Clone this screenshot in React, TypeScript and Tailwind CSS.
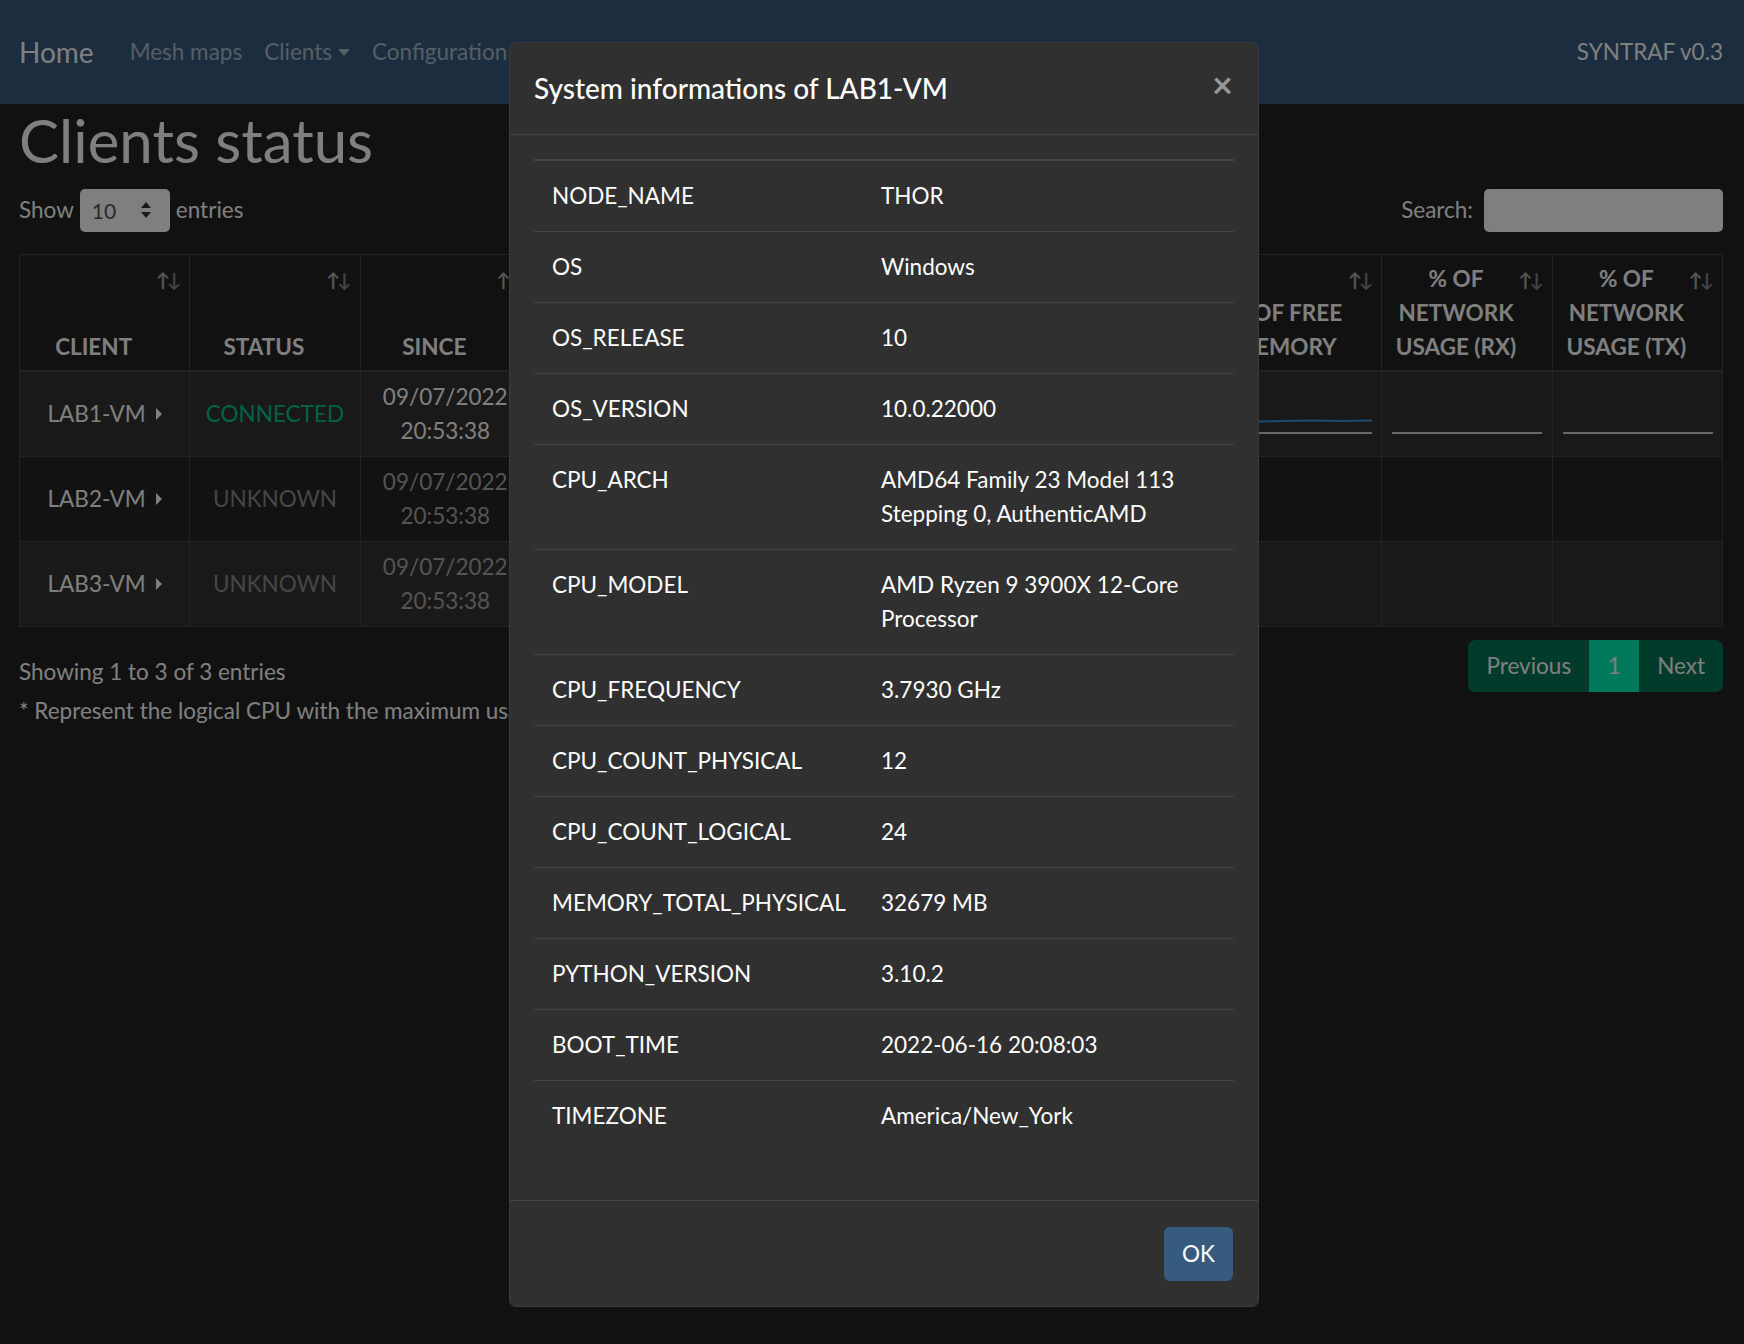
import React from "react";

const columns = [
  "CLIENT",
  "STATUS",
  "SINCE",
  "IP ADDRESS",
  "UPTIME",
  "% OF CPU USAGE",
  "% OF MAX CPU *",
  "% OF FREE MEMORY",
  "% OF NETWORK USAGE (RX)",
  "% OF NETWORK USAGE (TX)",
];

const clients = [
  { name: "LAB1-VM", status: "CONNECTED", connected: true },
  { name: "LAB2-VM", status: "UNKNOWN", connected: false },
  { name: "LAB3-VM", status: "UNKNOWN", connected: false },
];

const sysinfo: [string, string][] = [
  ["NODE_NAME", "THOR"],
  ["OS", "Windows"],
  ["OS_RELEASE", "10"],
  ["OS_VERSION", "10.0.22000"],
  ["CPU_ARCH", "AMD64 Family 23 Model 113 Stepping 0, AuthenticAMD"],
  ["CPU_MODEL", "AMD Ryzen 9 3900X 12-Core Processor"],
  ["CPU_FREQUENCY", "3.7930 GHz"],
  ["CPU_COUNT_PHYSICAL", "12"],
  ["CPU_COUNT_LOGICAL", "24"],
  ["MEMORY_TOTAL_PHYSICAL", "32679 MB"],
  ["PYTHON_VERSION", "3.10.2"],
  ["BOOT_TIME", "2022-06-16 20:08:03"],
  ["TIMEZONE", "America/New_York"],
];

function SortIcon() {
  return (
    <span className="absolute right-[11px] top-[15px] flex text-[19px] leading-none tracking-[-3px]">
      <span className="text-[#aaa]">↑</span>
      <span className="text-[#888]">↓</span>
    </span>
  );
}

function Sparkline({ line }: { line: boolean }) {
  return (
    <svg width="150" height="40" viewBox="0 0 150 40" className="mx-auto block">
      {line && (
        <polyline
          points="0,27 30,27.5 60,27 90,26.5 120,27 150,26.5"
          fill="none"
          stroke="#3a97dd"
          strokeWidth="2"
        />
      )}
      <line x1="0" y1="39" x2="150" y2="39" stroke="#d0d0d0" strokeWidth="2" />
    </svg>
  );
}

export default function App() {
  return (
    <div className="relative min-h-screen bg-[#222] font-['Lato',sans-serif] text-white">
      {/* navbar */}
      <nav className="flex h-[104px] items-center bg-[#375a7f] pl-[19px] pr-[21px]">
        <span className="mr-[36px] text-[28px] leading-none">Home</span>
        <div className="flex items-center gap-[22px] text-[22.5px] text-white/60">
          <span>Mesh maps</span>
          <span className="flex items-center gap-[6px]">
            Clients
            <svg width="12" height="7" viewBox="0 0 12 7">
              <path d="M0 0h12L6 7z" fill="currentColor" />
            </svg>
          </span>
          <span>Configuration</span>
        </div>
        <span className="ml-auto text-[22.5px]">SYNTRAF v0.3</span>
      </nav>

      <main className="pl-[19px] pr-[21px]">
        <h1 className="h-[72px] text-[60px] leading-[72px]">Clients status</h1>

        <div className="mt-[12px] flex h-[44px] items-center text-[22.5px]">
          <span>Show</span>
          <div className="ml-[6px] mr-[6px] flex h-[43px] w-[90px] items-center justify-between rounded-[5px] bg-white pl-[12px] pr-[18px] text-[21px] text-[#555]">
            <span className="mt-[2px]">10</span>
            <svg width="12" height="18" viewBox="0 0 12 18">
              <path d="M6 1l5 6H1zM6 17l5-6H1z" fill="#333" />
            </svg>
          </div>
          <span>entries</span>
          <span className="ml-auto mr-[11px]">Search:</span>
          <div className="h-[43px] w-[239px] rounded-[5px] bg-white" />
        </div>

        <table className="mt-[22px] w-full table-fixed border-collapse border border-[#444] text-[22.5px] leading-[34px]">
          <thead>
            <tr className="h-[116px] border-b-2 border-[#444] bg-[#222]">
              {columns.map((c) => (
                <th
                  key={c}
                  className="relative border-x border-[#444] pb-[6px] pl-[10px] pr-[32px] pt-[6px] text-center align-bottom font-bold"
                >
                  {c}
                  <SortIcon />
                </th>
              ))}
            </tr>
          </thead>
          <tbody>
            {clients.map((cl, i) => (
              <tr
                key={cl.name}
                className={`h-[84px] border-t border-[#444] ${i % 2 === 0 ? "bg-[#333]" : "bg-[#252525]"}`}
              >
                <td className="border-x border-[#444] px-[8px] text-center">
                  <span className="inline-flex items-center gap-[10px]">
                    {cl.name}
                    <svg width="6" height="12" viewBox="0 0 6 12">
                      <path d="M0 0l6 6-6 6z" fill="currentColor" />
                    </svg>
                  </span>
                </td>
                <td
                  className={`border-x border-[#444] px-[8px] text-center ${cl.connected ? "text-[#00c490]" : "text-[#8c8c8c]"}`}
                >
                  {cl.status}
                </td>
                <td
                  className={`border-x border-[#444] px-[8px] py-[8px] text-center ${cl.connected ? "" : "text-[#a8a8a8]"}`}
                >
                  09/07/2022
                  <br />
                  20:53:38
                </td>
                {columns.slice(3).map((c) => (
                  <td key={c} className="border-x border-[#444] px-[10px] text-center">
                    {cl.connected && <Sparkline line={c === "% OF FREE MEMORY"} />}
                  </td>
                ))}
              </tr>
            ))}
          </tbody>
        </table>

        <div className="mt-[13px] flex items-start text-[22.5px]">
          <div>
            <div className="mt-[12px] leading-[39px]">Showing 1 to 3 of 3 entries</div>
            <div className="leading-[39px]">* Represent the logical CPU with the maximum usage</div>
          </div>
          <div className="ml-auto flex h-[52px] overflow-hidden rounded-[7px] leading-[52px]">
            <span className="bg-[#007454] px-[18px]">Previous</span>
            <span className="w-[50px] bg-[#00f0b4] text-center">1</span>
            <span className="bg-[#007454] px-[18px]">Next</span>
          </div>
        </div>
      </main>

      {/* backdrop */}
      <div className="fixed inset-0 bg-black/50" />

      {/* modal */}
      <div className="fixed inset-0">
        <div className="ml-[509px] mt-[42px] w-[750px] rounded-[7px] border border-[#3a3a3a] bg-[#303030]">
          <div className="flex items-start justify-between border-b border-[#444] px-[24px] py-[24px]">
            <h5 className="text-[28px] font-medium leading-[43px]">System informations of LAB1-VM</h5>
            <span className="mr-[1px] mt-[-4px] text-[36px] font-bold leading-[43px] text-white/50">×</span>
          </div>
          <div className="px-[24px] pb-[25px] pt-[24px]">
            <table className="mb-[24px] w-full table-fixed border-t-2 border-[#444] text-[22.5px] leading-[34px]">
              <tbody>
                {sysinfo.map(([k, v], i) => (
                  <tr key={k} className={i > 0 ? "border-t border-[#444]" : ""}>
                    <td className="w-[329px] p-[18px] align-top">{k}</td>
                    <td className="p-[18px] align-top">{v}</td>
                  </tr>
                ))}
              </tbody>
            </table>
          </div>
          <div className="flex justify-end border-t border-[#444] px-[25px] pb-[25px] pt-[26px]">
            <button className="h-[54px] rounded-[6px] bg-[#375a7f] px-[18px] text-[22.5px] text-white">OK</button>
          </div>
        </div>
      </div>
    </div>
  );
}
